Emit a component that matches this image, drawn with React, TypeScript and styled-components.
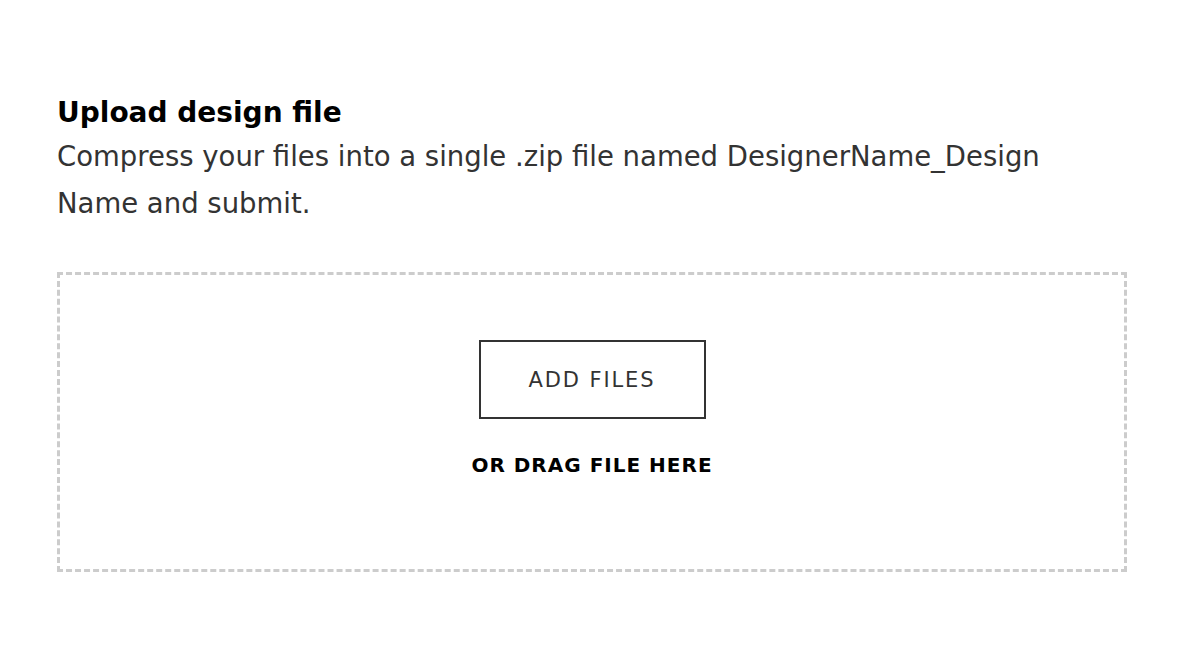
import styled, { createGlobalStyle } from "styled-components";

const GlobalStyle = createGlobalStyle`
  body {
    margin: 0;
    background: #fff;
    font-family: "DejaVu Sans", "Open Sans", sans-serif;
  }
`;

const Page = styled.div`
  padding: 93px 0 0 57px;
  width: 1070px;
`;

const Title = styled.h2`
  margin: 0;
  font-size: 28px;
  line-height: 40px;
  font-weight: 700;
  color: #000;
`;

const Description = styled.p`
  margin: 0;
  max-width: 1040px;
  font-size: 27.5px;
  line-height: 47px;
  font-weight: 400;
  color: #333;
`;

const DropZone = styled.div`
  margin-top: 45px;
  border: 3px dashed #cccccc;
  display: flex;
  flex-direction: column;
  align-items: center;
  padding-top: 65px;
  box-sizing: border-box;
  height: 300px;
`;

const AddButton = styled.button`
  width: 227px;
  height: 79px;
  border: 2px solid #333;
  background: #fff;
  font-family: inherit;
  font-size: 21px;
  font-weight: 400;
  letter-spacing: 1.9px;
  color: #333;
  cursor: pointer;
`;

const DragHint = styled.span`
  margin-top: 34px;
  font-size: 20px;
  font-weight: 700;
  letter-spacing: 1px;
  color: #000;
`;

function App() {
  return (
    <>
      <GlobalStyle />
      <Page>
        <Title>Upload design file</Title>
        <Description>
          Compress your files into a single .zip file named DesignerName_Design Name and submit.
        </Description>
        <DropZone>
          <AddButton>ADD FILES</AddButton>
          <DragHint>OR DRAG FILE HERE</DragHint>
        </DropZone>
      </Page>
    </>
  );
}

export default App;
